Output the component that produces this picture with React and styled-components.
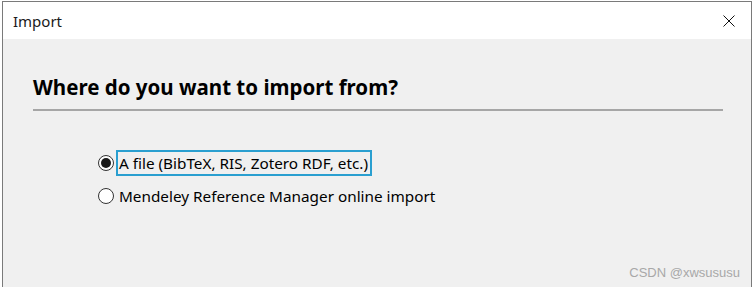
import styled, { createGlobalStyle } from 'styled-components';

const GlobalStyle = createGlobalStyle`
  html, body {
    margin: 0;
    padding: 0;
    background: #ffffff;
    overflow: hidden;
  }
  body {
    font-family: 'Segoe UI', 'Noto Sans', 'Open Sans', sans-serif;
  }
`;

const Window = styled.div`
  position: relative;
  display: flex;
  flex-direction: column;
  box-sizing: border-box;
  width: 750px;
  height: 286px;
  margin: 1px 0 0 2px;
  border: 1px solid #7a7a7a;
  border-bottom: none;
  background: #f0f0f0;
`;

const TitleBar = styled.div`
  display: flex;
  align-items: center;
  justify-content: space-between;
  height: 37px;
  padding: 0 16px 0 10px;
  background: #ffffff;
  color: #1a1a1a;
  font-size: 15px;
`;

const CloseButton = styled.div`
  display: flex;
  width: 12px;
  height: 12px;
`;

const Body = styled.div`
  display: flex;
  flex-direction: column;
  padding: 35px 28px 0 30px;
`;

const Heading = styled.h1`
  margin: 0;
  padding-bottom: 8px;
  border-bottom: 2px solid #a6a6a6;
  color: #000;
  font-size: 20.5px;
  font-weight: 700;
  line-height: 27px;
`;

const Options = styled.div`
  display: flex;
  flex-direction: column;
  gap: 7px;
  padding: 39px 0 0 65px;
`;

const Option = styled.label`
  display: flex;
  align-items: center;
  gap: 2px;
  color: #000;
  font-size: 15.3px;
`;

const Radio = styled.span`
  display: flex;
  align-items: center;
  justify-content: center;
  box-sizing: border-box;
  width: 16px;
  height: 16px;
  border: 1px solid #333;
  border-radius: 50%;
  background: #fff;

  &::after {
    content: '';
    display: ${({ checked }) => (checked ? 'block' : 'none')};
    width: 10px;
    height: 10px;
    border-radius: 50%;
    background: #1a1a1a;
  }
`;

const OptionText = styled.span`
  box-sizing: border-box;
  padding: 1px 2px 1px 1px;
  border: 2px solid ${({ focused }) => (focused ? '#2a9fd0' : 'transparent')};
  line-height: 20px;
`;

const Watermark = styled.div`
  position: absolute;
  top: 263px;
  right: 11px;
  color: #a8a8a8;
  font-family: 'Liberation Sans', Arial, sans-serif;
  font-size: 13px;
  line-height: 16px;
`;

const App = () => {
  return (
    <>
      <GlobalStyle />
      <Window>
        <TitleBar>
          <span>Import</span>
          <CloseButton>
            <svg width="12" height="12" viewBox="0 0 12 12">
              <path d="M0.5 0.5 L11.5 11.5 M11.5 0.5 L0.5 11.5" stroke="#111" strokeWidth="1" />
            </svg>
          </CloseButton>
        </TitleBar>
        <Body>
          <Heading>Where do you want to import from?</Heading>
          <Options>
            <Option>
              <Radio checked />
              <OptionText focused>A file (BibTeX, RIS, Zotero RDF, etc.)</OptionText>
            </Option>
            <Option>
              <Radio />
              <OptionText>Mendeley Reference Manager online import</OptionText>
            </Option>
          </Options>
        </Body>
        <Watermark>CSDN @xwsususu</Watermark>
      </Window>
    </>
  );
};

export default App;
